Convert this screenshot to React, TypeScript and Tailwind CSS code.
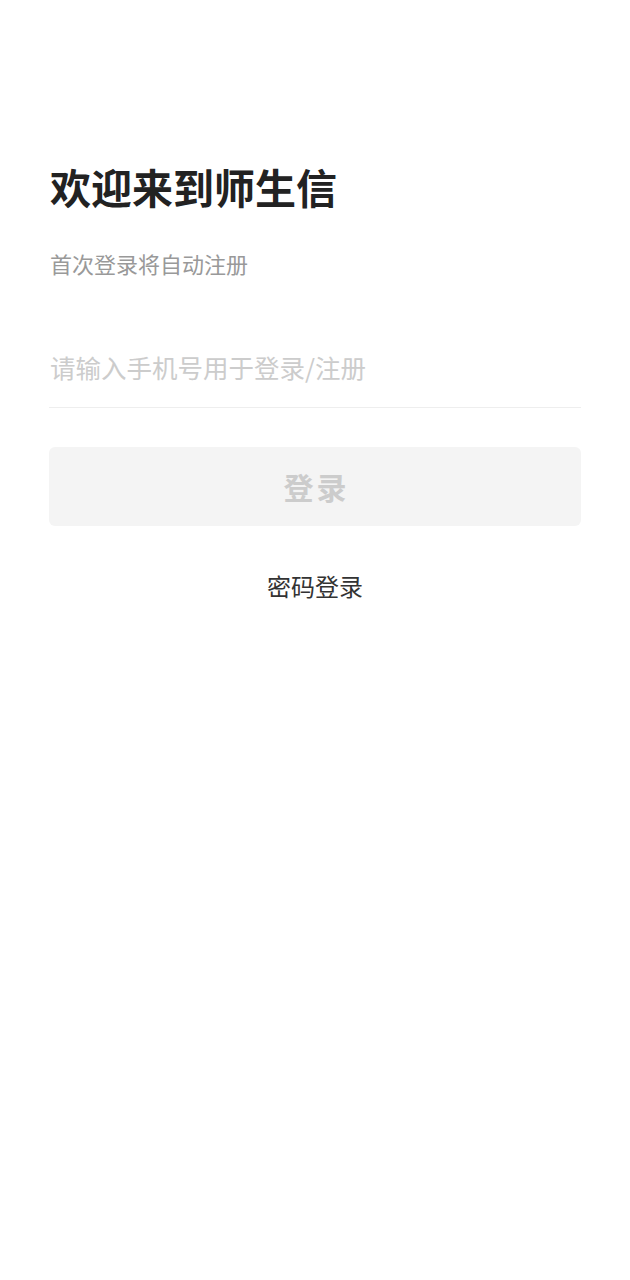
export default function App() {
  return (
    <div
      className="min-h-[1280px] w-full bg-white"
      style={{ fontFamily: '"Noto Sans CJK SC", "Noto Sans", sans-serif' }}
    >
      <div className="flex flex-col px-[49px] pt-[162px]">
        {/* Title */}
        <h1 className="pl-[1px] text-[41px] leading-[48px] font-bold text-[#222222]">
          欢迎来到师生信
        </h1>

        <p className="mt-[38px] pl-[1px] text-[22px] leading-[30px] text-[#999999]">
          首次登录将自动注册
        </p>

        {/* Phone input */}
        <div className="mt-[50px] flex h-[80px] items-center border-b border-[#eeeeee] pl-[1px]">
          <input
            type="tel"
            placeholder="请输入手机号用于登录/注册"
            className="w-full bg-transparent text-[25.5px] text-[#333333] outline-none placeholder:text-[#cccccc]"
          />
        </div>

        {/* Login button */}
        <button
          type="button"
          className="mt-[39px] flex h-[79px] w-full items-center justify-center rounded-[6px] bg-[#f4f4f4] pl-[3px] text-[30px] font-bold tracking-[3px] text-[#cccccc]"
        >
          登录
        </button>

        <button
          type="button"
          className="mt-[45px] self-center text-[24px] leading-[30px] text-[#333333]"
        >
          密码登录
        </button>
      </div>
    </div>
  );
}
